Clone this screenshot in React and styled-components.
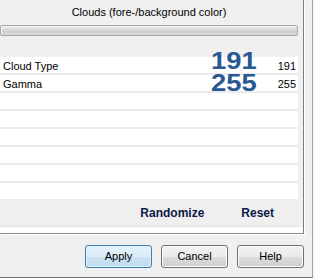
import React from "react";
import styled, { createGlobalStyle } from "styled-components";

const GlobalStyle = createGlobalStyle`
  html, body {
    margin: 0;
    padding: 0;
    background: #f7f7f7;
  }
  body {
    font-family: "Liberation Sans", Arial, sans-serif;
    font-size: 11px;
    color: #000;
  }
`;

const StyledWindow = styled.div`
  width: 315px;
  height: 278px;
  background: #f7f7f7;
  overflow: hidden;
`;

const StyledFrame = styled.div`
  width: 312px;
  height: 277px;
  display: flex;
  flex-direction: column;
  background: #f0f0f0;
  border-right: 1px solid #a0a0a0;
  border-bottom: 1px solid #6f6f6f;
`;

const StyledPanel = styled.div`
  width: 303px;
  height: 233px;
  display: flex;
  flex-direction: column;
  border-right: 1px solid #7e7e7e;
  border-bottom: 1px solid #8a8a8a;
  box-shadow: 1px 1px 0 #ffffff;
  background: #ffffff;
`;

const StyledPanelBody = styled.div`
  display: flex;
  background: #f0f0f0;
`;

const StyledContent = styled.div`
  width: 298px;
  display: flex;
  flex-direction: column;
`;

const StyledTitle = styled.div`
  height: 24px;
  line-height: 25px;
  text-align: center;
  font-size: 11px;
  color: #000;
  padding-bottom: 1px;
`;

const StyledProgress = styled.div`
  height: 9px;
  border: 1px solid #a6a6a6;
  border-radius: 2px;
  background: linear-gradient(#ececec 0%, #dcdcdc 45%, #cfcfcf 55%, #dadada 100%);
  box-shadow: inset 1px 1px 0 #f6f6f6;
`;

const StyledSpacer = styled.div`
  height: 21px;
`;

const StyledRows = styled.div`
  position: relative;
  display: flex;
  flex-direction: column;
`;

const StyledRow = styled.div`
  height: 16px;
  display: flex;
  justify-content: space-between;
  background: #ffffff;
  border-bottom: 2px solid #ebebeb;
  padding-left: 3px;
  padding-right: 2px;
`;

const StyledLabel = styled.span`
  line-height: 19px;
  font-size: 11px;
  white-space: nowrap;
`;

const StyledValue = styled.span`
  line-height: 19px;
  font-size: 11px;
  text-align: right;
`;

/* large readouts float over the first two rows */
const StyledBigValues = styled.div`
  position: absolute;
  left: 211px;
  top: -7px;
  display: flex;
  flex-direction: column;
`;

const StyledBigNumber = styled.span`
  display: block;
  line-height: 22px;
  font-family: "Liberation Sans", Arial, sans-serif;
  font-weight: bold;
  font-size: 24px;
  color: #285993;
  transform: scaleX(1.14);
  transform-origin: left center;
  white-space: nowrap;
`;

const StyledFooter = styled.div`
  height: 25px;
  display: flex;
  justify-content: flex-end;
  gap: 37px;
  padding-right: 24px;
  background: #efefef;
  border-bottom: 1px solid #e2e2e2;
`;

const StyledAction = styled.span`
  line-height: 25px;
  font-size: 12px;
  font-weight: bold;
  color: #0c1a48;
`;

const StyledGutter = styled.div`
  width: 5px;
  background: #f0f0f0;
`;

const StyledStrip = styled.div`
  height: 7px;
  background: #ffffff;
`;

const StyledButtonBar = styled.div`
  flex: 1;
  display: flex;
  justify-content: flex-end;
  align-items: center;
  gap: 9px;
  padding-right: 8px;
  padding-top: 1px;
`;

const StyledButton = styled.button`
  width: 67px;
  height: 23px;
  padding: 0;
  font-family: "Liberation Sans", Arial, sans-serif;
  font-size: 11px;
  color: #000;
  border-radius: 3px;
  border: 1px solid ${(p) => (p.$primary ? "#3c7fb1" : "#707070")};
  background: ${(p) =>
    p.$primary
      ? "linear-gradient(#e6f3fb 0%, #dbecf8 50%, #cde3f3 51%, #c0dbef 100%)"
      : "linear-gradient(#f2f2f2 0%, #ebebeb 50%, #dddddd 51%, #cfcfcf 100%)"};
  box-shadow: inset 0 0 0 1px ${(p) => (p.$primary ? "#e3f2fc" : "#fbfbfb")};
`;

const params = [
  { label: "Cloud Type", value: 191 },
  { label: "Gamma", value: 255 },
];

const rows = [...params, null, null, null, null, null, null];

const App = () => {
  return (
    <StyledWindow>
      <GlobalStyle />
      <StyledFrame>
        <StyledPanel>
          <StyledPanelBody>
            <StyledContent>
              <StyledTitle>Clouds (fore-/background color)</StyledTitle>
              <StyledProgress />
              <StyledSpacer />
              <StyledRows>
                {rows.map((row, i) => (
                  <StyledRow key={i}>
                    <StyledLabel>{row ? row.label : ""}</StyledLabel>
                    <StyledValue>{row ? row.value : ""}</StyledValue>
                  </StyledRow>
                ))}
                <StyledBigValues>
                  {params.map((p) => (
                    <StyledBigNumber key={p.label}>{p.value}</StyledBigNumber>
                  ))}
                </StyledBigValues>
              </StyledRows>
              <StyledFooter>
                <StyledAction>Randomize</StyledAction>
                <StyledAction>Reset</StyledAction>
              </StyledFooter>
            </StyledContent>
            <StyledGutter />
          </StyledPanelBody>
          <StyledStrip />
        </StyledPanel>
        <StyledButtonBar>
          <StyledButton $primary>Apply</StyledButton>
          <StyledButton>Cancel</StyledButton>
          <StyledButton>Help</StyledButton>
        </StyledButtonBar>
      </StyledFrame>
    </StyledWindow>
  );
};

export default App;
